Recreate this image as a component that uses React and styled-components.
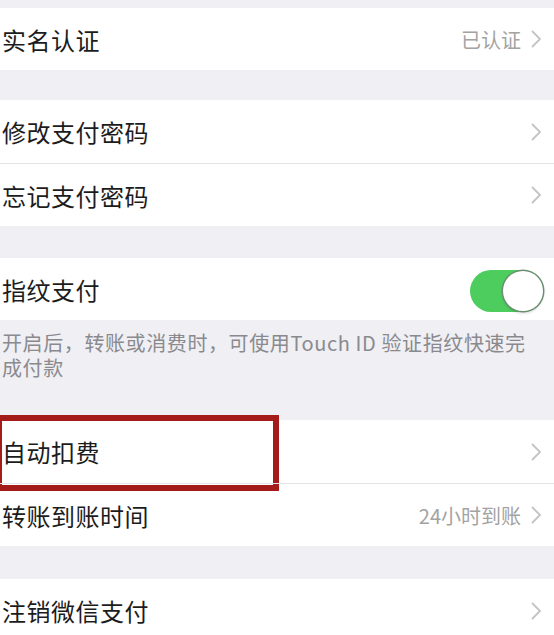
import React from "react";
import styled, { createGlobalStyle } from "styled-components";

const Global = createGlobalStyle`
  html, body { margin: 0; padding: 0; background: #efeff4; }
  body { font-family: "Noto Sans CJK SC", "Noto Sans", sans-serif; }
`;

const Page = styled.div`
  width: 554px;
  height: 635px;
  overflow: hidden;
  background: #efeff4;
  display: flex;
  flex-direction: column;
  padding-top: 8px;
  box-sizing: border-box;
`;

const Group = styled.div`
  background: #fff;
  display: flex;
  flex-direction: column;
  margin-bottom: ${(p) => p.$gap || 0}px;
`;

const Row = styled.div`
  position: relative;
  height: ${(p) => p.$h || 63}px;
  display: flex;
  align-items: center;
  padding: 0 12px 0 2px;
  box-sizing: border-box;
  border-top: ${(p) => (p.$divider ? "1px solid #e4e4e8" : "none")};
`;

const Label = styled.div`
  flex: 1;
  font-size: 24px;
  color: #1c1c1c;
  letter-spacing: 0.5px;
`;

const Value = styled.div`
  font-size: 20px;
  color: #a3a3a3;
  margin-right: 10px;
`;

const Note = styled.div`
  padding: 10px 20px 40px 2px;
  font-size: 20px;
  line-height: 25px;
  color: #8a8a8e;
  letter-spacing: 0.6px;
`;

const Switch = styled.div`
  width: 74px;
  height: 42px;
  border-radius: 21px;
  background: #4ccd5e;
  position: relative;
  margin-right: -2px;
  margin-top: 3px;
`;

const Knob = styled.div`
  position: absolute;
  right: 1px;
  top: 1px;
  width: 40px;
  height: 40px;
  border-radius: 50%;
  background: #fff;
  box-shadow: 0 0 0 1.5px #6a8f70, 0 2px 3px rgba(0, 0, 0, 0.2);
`;

const Highlight = styled.div`
  position: absolute;
  left: -4px;
  top: -5px;
  width: 283px;
  height: 76px;
  border: 6px solid #a41c1a;
  box-sizing: border-box;
  pointer-events: none;
`;

const Chevron = () => (
  <svg width="11" height="18" viewBox="0 0 11 18">
    <polyline
      points="1.5,1.5 9,9 1.5,16.5"
      fill="none"
      stroke="#c4c4c8"
      strokeWidth="1.8"
      strokeLinecap="round"
      strokeLinejoin="round"
    />
  </svg>
);

const Item = ({ label, value, divider, h, chevron = true, children }) => (
  <Row $divider={divider} $h={h}>
    <Label>{label}</Label>
    {value && <Value>{value}</Value>}
    {chevron && <Chevron />}
    {children}
  </Row>
);

export default function App() {
  return (
    <Page>
      <Global />
      <Group $gap={30}>
        <Item label="实名认证" value="已认证" h={62} />
      </Group>
      <Group $gap={32}>
        <Item label="修改支付密码" />
        <Item label="忘记支付密码" divider />
      </Group>
      <Group>
        <Row $h={62}>
          <Label>指纹支付</Label>
          <Switch>
            <Knob />
          </Switch>
        </Row>
      </Group>
      <Note>开启后，转账或消费时，可使用Touch ID 验证指纹快速完成付款</Note>
      <Group $gap={33}>
        <Row $h={63}>
          <Label>自动扣费</Label>
          <Chevron />
          <Highlight />
        </Row>
        <Item label="转账到账时间" value="24小时到账" divider />
      </Group>
      <Group>
        <Item label="注销微信支付" />
      </Group>
    </Page>
  );
}
